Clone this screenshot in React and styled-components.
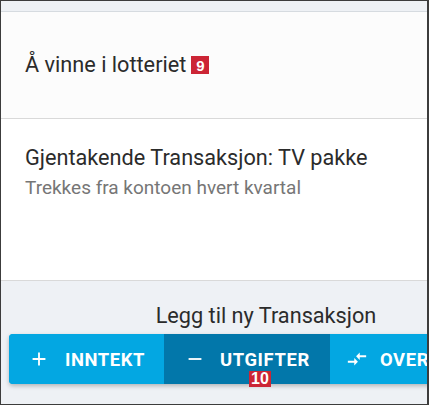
import React from 'react'
import styled, { createGlobalStyle } from 'styled-components'

const Global = createGlobalStyle`
  html, body { margin: 0; padding: 0; }
  body { font-family: Roboto, "Liberation Sans", Arial, sans-serif; }
  * { box-sizing: border-box; }
`

const Frame = styled.div`
  width: 429px;
  height: 405px;
  border: 1px solid #3c3c3c;
  border-right-width: 2px;
  background: #eef1f5;
  overflow: hidden;
  display: flex;
  flex-direction: column;
`

const TopStrip = styled.div`
  height: 11px;
  flex: none;
  background: #eef1f5;
  border-bottom: 1px solid #d6dbe0;
`

const Card = styled.div`
  flex: none;
  height: ${p => p.h}px;
  background: ${p => p.bg || '#fff'};
  border-bottom: 1px solid #d9d9d9;
  padding: ${p => p.pad || '0 24px'};
  display: flex;
  flex-direction: column;
  justify-content: ${p => p.center ? 'center' : 'flex-start'};
`

const Title = styled.div`
  font-size: 21.7px;
  color: #2b2b2b;
  line-height: 26px;
  display: flex;
  align-items: center;
`

const Sub = styled.div`
  font-size: 19px;
  color: #767676;
  line-height: 24px;
  margin-top: 5px;
`

const Badge = styled.span`
  display: inline-flex;
  align-items: center;
  justify-content: center;
  min-width: 18px;
  height: 18px;
  padding: 0 2px;
  background: #cc2535;
  color: #fff;
  font-family: "Liberation Sans", Arial, sans-serif;
  font-weight: 700;
  font-size: 15px;
  line-height: 1;
  margin-left: ${p => p.ml || 0}px;
`

const Bottom = styled.div`
  flex: 1;
  padding: 22px 0 0 8px;
`

const Group = styled.div`
  width: 514px;
  display: flex;
  flex-direction: column;
  align-items: center;
`

const AddLabel = styled.div`
  font-size: 21.7px;
  color: #2b2b2b;
  line-height: 26px;
  margin-bottom: 5px;
`

const Buttons = styled.div`
  width: 100%;
  display: flex;
  height: 50px;
  border-radius: 4px;
  background: #03a7e2;
  box-shadow: 0 2px 4px rgba(0, 0, 0, 0.25);
`

const Btn = styled.div`
  position: relative;
  flex: none;
  width: ${p => p.w}px;
  display: flex;
  align-items: center;
  padding-left: ${p => p.pl}px;
  gap: ${p => p.gap}px;
  background: ${p => (p.active ? '#0277aa' : '#03a7e2')};
  color: #fff;
  font-weight: 700;
  font-size: 18.4px;
  letter-spacing: 0.6px;
  text-transform: uppercase;
  &:first-child { border-radius: 4px 0 0 4px; }
`

const BtnBadge = styled(Badge)`
  position: absolute;
  left: ${p => p.x}px;
  bottom: -3px;
  height: 16px;
  font-size: 16px;
  letter-spacing: 0;
`

const Icon = ({ d }) => (
  <svg width="22" height="22" viewBox="0 0 24 24" fill="#fff">
    <path d={d} />
  </svg>
)

const PLUS = 'M19 13h-6v6h-2v-6H5v-2h6V5h2v6h6v2z'
const MINUS = 'M19 13H5v-2h14v2z'
const SWAP = 'M9.01 14H2v2h7.01v3L13 15l-3.99-4v3zm5.98-1v-3H22V8h-7.01V5L11 9l3.99 4z'

export default function App() {
  return (
    <>
      <Global />
      <Frame>
        <TopStrip />
        <Card h={107} bg="#fcfcfc" center>
          <Title>
            Å vinne i lotteriet<Badge ml={5}>9</Badge>
          </Title>
        </Card>
        <Card h={162} pad="26px 24px 0">
          <Title>Gjentakende Transaksjon: TV pakke</Title>
          <Sub>Trekkes fra kontoen hvert kvartal</Sub>
        </Card>
        <Bottom>
          <Group>
            <AddLabel>Legg til ny Transaksjon</AddLabel>
            <Buttons>
              <Btn w={155} pl={19} gap={15}>
                <Icon d={PLUS} />
                Inntekt
              </Btn>
              <Btn w={166} pl={20} gap={14} active>
                <Icon d={MINUS} />
                Utgifter
                <BtnBadge x={85}>10</BtnBadge>
              </Btn>
              <Btn w={193} pl={16} gap={12}>
                <Icon d={SWAP} />
                Overføring
              </Btn>
            </Buttons>
          </Group>
        </Bottom>
      </Frame>
    </>
  )
}
